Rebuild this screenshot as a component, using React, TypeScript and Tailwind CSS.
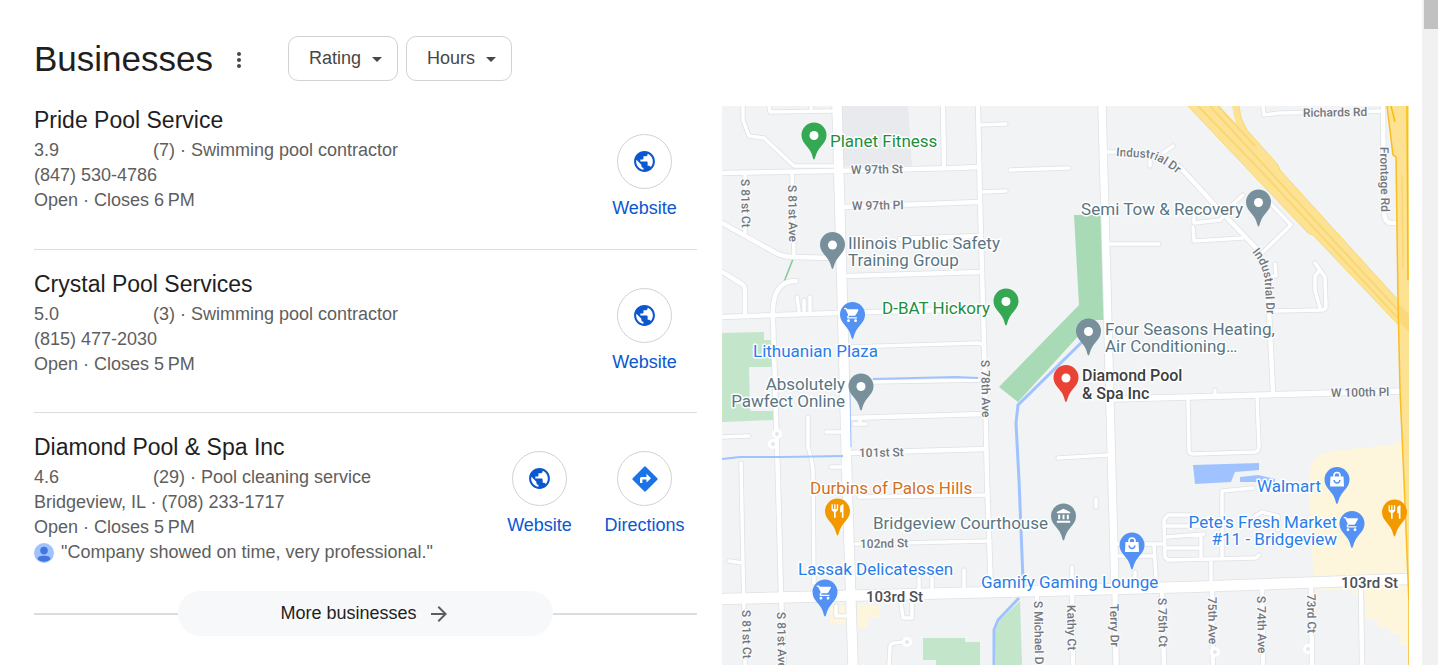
import React from "react";
import {
  MdAccountBalance,
  MdArrowDropDown,
  MdArrowForward,
  MdMoreVert,
  MdPublic,
  MdRestaurant,
  MdShoppingCart,
} from "react-icons/md";

type Business = {
  name: string;
  rating: string;
  reviews: string;
  contact: string;
  hours: string;
  quote?: string;
  directions?: boolean;
};

const businesses: Business[] = [
  {
    name: "Pride Pool Service",
    rating: "3.9",
    reviews: "(7) · Swimming pool contractor",
    contact: "(847) 530-4786",
    hours: "Open · Closes 6\u202fPM",
  },
  {
    name: "Crystal Pool Services",
    rating: "5.0",
    reviews: "(3) · Swimming pool contractor",
    contact: "(815) 477-2030",
    hours: "Open · Closes 5\u202fPM",
  },
  {
    name: "Diamond Pool & Spa Inc",
    rating: "4.6",
    reviews: "(29) · Pool cleaning service",
    contact: "Bridgeview, IL · (708) 233-1717",
    hours: "Open · Closes 5\u202fPM",
    quote: '"Company showed on time, very professional."',
    directions: true,
  },
];

function FilterButton({ label }: { label: string }) {
  return (
    <button
      type="button"
      className="flex h-[45px] items-center rounded-[10px] border border-[#d2d2d2] pr-2 pl-5 text-[18px] text-[#474747]"
    >
      <span className="pb-px">{label}</span>
      <MdArrowDropDown className="ml-1 size-6" aria-hidden="true" />
    </button>
  );
}

function DirectionsIcon() {
  return (
    <svg viewBox="0 0 26 26" className="size-[26px]" aria-hidden="true">
      <path
        d="M12.200 0.700a1.200 1.200 0 0 1 1.600 0L25.300 12.200a1.200 1.200 0 0 1 0 1.600L13.800 25.300a1.200 1.200 0 0 1-1.600 0L0.700 13.800a1.200 1.200 0 0 1 0-1.600Z"
        fill="#1a73e8"
      />
      <path d="M8 17V12.500A1.500 1.500 0 0 1 9.500 11H14.500V7.800L19 12.200L14.500 16.600V13.400H10.400V17Z" fill="#fff" />
    </svg>
  );
}

function Action({ label, children }: { label: string; children: React.ReactNode }) {
  return (
    <a href="#" className="flex w-[105px] flex-col items-center text-[#0b57d0]">
      <span className="flex size-[55px] items-center justify-center rounded-full border border-[#d2d2d2]">
        {children}
      </span>
      <span className="mt-[7px] text-[18px] leading-[25px]">{label}</span>
    </a>
  );
}

function Avatar() {
  return (
    <svg viewBox="0 0 20 20" className="size-5 shrink-0" aria-hidden="true">
      <circle cx="10" cy="10" r="10" fill="#a0c3ff" />
      <circle cx="10" cy="7.600" r="3.800" fill="#4374e0" />
      <path d="M3.600 16.200C3.600 13.600 6 12.800 10 12.800S16.400 13.600 16.400 16.200A9 9 0 0 1 3.600 16.200Z" fill="#4374e0" />
    </svg>
  );
}

function BusinessItem({ business, first, last }: { business: Business; first: boolean; last: boolean }) {
  return (
    <li className={last ? "flex justify-between" : "flex justify-between border-b border-[#dadce0]"}>
      <div className={`min-w-0 ${first ? "" : "pt-5"} ${last ? "pb-[11px]" : first ? "pb-9" : "pb-[35px]"}`}>
        <h2 className="text-[23px] leading-7 text-[#1f1f1f]">
          <a href="#">{business.name}</a>
        </h2>
        <div className="mt-1 text-[18px] leading-[25px] text-[#5e5e5e]">
          <div className="flex">
            <span className="w-[119px]">{business.rating}</span>
            <span>{business.reviews}</span>
          </div>
          <div>{business.contact}</div>
          <div>{business.hours}</div>
          {business.quote && (
            <div className="flex items-center gap-[7px]">
              <Avatar />
              <span>{business.quote}</span>
            </div>
          )}
        </div>
      </div>
      <div className="flex self-center">
        <Action label="Website">
          <MdPublic className="size-[25px]" aria-hidden="true" />
        </Action>
        {business.directions && (
          <Action label="Directions">
            <DirectionsIcon />
          </Action>
        )}
      </div>
    </li>
  );
}

const roads: [number, string][] = [
  [3, "M743 106V120L749 136L764 138L794 166H836"],
  [3, "M769 106L770 112L833 111M811 106V111"],
  [4, "M722 173L833 171L956 168L978 167"],
  [3, "M745 174V233M792 173L794 257"],
  [4, "M722 223L776 253Q784 257 794 257L835 258"],
  [4, "M722 272L742 284Q745 286 745 292V315"],
  [4, "M796 281Q780 281 775 296Q772 306 773 320L776 417L778 480L781 595L784 665"],
  [4, "M844 207L979 202M900 239L979 236M848 276L982 272M943 106L944 167"],
  [3, "M980 125L1006 124M1010 170L1069 168M982 192L1006 191M1110 244H1159"],
  [3, "M797 297L799 311M804 300V311M810 297V311"],
  [4, "M722 317L838 313L983 309"],
  [3, "M849 347L978 343Q984 343 984 350"],
  [3, "M873 382L985 380"],
  [4, "M848 418L985 414M849 453L986 449"],
  [3, "M854 424H866M860 418V424M826 432H843M831 467H846M722 437L749 436"],
  [3, "M808 417V447Q812 458 813 470L814 583M741 463L745 665M729 561L743 563"],
  [4, "M978 106L980 200L984 343L987 480L991 590"],
  [3, "M1107 152H1117M1150 158V166M1163 153L1173 146"],
  [4, "M1117 152L1152 154L1180 167L1213 203L1255 247Q1267 262 1268 290L1273 393"],
  [3, "M1243 195L1232 205M1270 203L1291 225L1263 252M1194 213V223L1220 220L1225 215M1193 227L1194 241L1243 238"],
  [3, "M1275 264L1276 276H1271M1315 263L1325 277L1326 306Q1326 310 1321 310L1275 311M1320 270L1315 276V290L1320 308"],
  [3, "M1263 106L1264 115L1280 113L1383 111"],
  [4, "M1383 106L1384 213Q1385 223 1391 223L1397 223"],
  [3, "M1058 458L1108 455M1096 499V507"],
  [3, "M1188 398L1189 450Q1189 454 1193 454L1255 452Q1259 451 1259 447L1257 397M1215 390V396"],
  [5, "M1113 399L1190 397L1402 391"],
  [3, "M859 497L988 495M856 544L990 541"],
  [3, "M1117 544H1163M1117 556H1153M1154 545L1156 577M1190 515H1168L1164 520L1165 557L1168 560L1256 558L1259 555M1166 526H1204M1166 537L1204 534M1166 548H1201M1201 537V558M1222 557V491L1253 488M1255 516L1262 512L1278 516V530M1211 560V580"],
  [3, "M964 570V588M919 578V590M932 578V590M1072 567V590M1135 572V585"],
  [3, "M901 603L903 618H912V603M889 665L890 647Q890 643 895 643L902 642M836 606V616H848"],
  [4, "M1037 597V665M1072 590L1073 665M1162 592L1164 665M1212 590L1213 665M1262 587L1263 665M1311 588L1312 665M1361 590L1362 665"],
  [5, "M1115 587L1116 665"],
  [7, "M1102 106L1107 290L1112 480L1115 587"],
  [9, "M837 106L842 290L847 480L853 665"],
  [10, "M722 599L956 593L1190 587L1408 579"],
];

const roundabouts: [number, number][] = [
  [907, 642],
  [1215, 652],
  [1308, 649],
  [777, 434],
  [773, 444],
];

const slate = "#78909c";
const green = "#34a853";
const blue = "#5491f5";
const orange = "#f29900";

type PinIcon = "cart" | "bag" | "food" | "civic";

const pins: { x: number; y: number; color: string; icon?: PinIcon }[] = [
  { x: 814, y: 159, color: green },
  { x: 832.5, y: 268.5, color: slate },
  { x: 1258.5, y: 226, color: slate },
  { x: 1006, y: 325, color: green },
  { x: 1088.5, y: 355, color: slate },
  { x: 1066, y: 401.5, color: "#ea4335" },
  { x: 852.5, y: 338.5, color: blue, icon: "cart" },
  { x: 861, y: 410, color: slate },
  { x: 837.5, y: 535, color: orange, icon: "food" },
  { x: 1063.5, y: 540, color: slate, icon: "civic" },
  { x: 1132, y: 569, color: blue, icon: "bag" },
  { x: 1337, y: 503.5, color: blue, icon: "bag" },
  { x: 1352, y: 547.5, color: blue, icon: "cart" },
  { x: 1394.5, y: 536, color: orange, icon: "food" },
  { x: 825, y: 616, color: blue, icon: "cart" },
];

const places: { x: number; y: number; text: string; color: string; end?: boolean }[] = [
  { x: 830, y: 147, text: "Planet Fitness", color: "#1e8e3e" },
  { x: 848, y: 249, text: "Illinois Public Safety", color: "#5a7683" },
  { x: 848, y: 266, text: "Training Group", color: "#5a7683" },
  { x: 1243, y: 215, text: "Semi Tow & Recovery", color: "#5a7683", end: true },
  { x: 990, y: 314, text: "D-BAT Hickory", color: "#1e8e3e", end: true },
  { x: 753, y: 357, text: "Lithuanian Plaza", color: "#2b7de9" },
  { x: 845, y: 390, text: "Absolutely", color: "#5a7683", end: true },
  { x: 845, y: 407, text: "Pawfect Online", color: "#5a7683", end: true },
  { x: 1105, y: 335, text: "Four Seasons Heating,", color: "#5a7683" },
  { x: 1105, y: 352, text: "Air Conditioning…", color: "#5a7683" },
  { x: 810, y: 494, text: "Durbins of Palos Hills", color: "#d2711c" },
  { x: 1048, y: 529, text: "Bridgeview Courthouse", color: "#5a7683", end: true },
  { x: 798, y: 575, text: "Lassak Delicatessen", color: "#2b7de9" },
  { x: 981, y: 588, text: "Gamify Gaming Lounge", color: "#2b7de9" },
  { x: 1321, y: 492, text: "Walmart", color: "#2b7de9", end: true },
  { x: 1337, y: 528, text: "Pete's Fresh Market", color: "#2b7de9", end: true },
  { x: 1337, y: 545, text: "#11 - Bridgeview", color: "#2b7de9", end: true },
];

const streets: { x: number; y: number; text: string; turn: number }[] = [
  { x: 851, y: 174, text: "W 97th St", turn: -1 },
  { x: 852, y: 210, text: "W 97th Pl", turn: -1 },
  { x: 859, y: 457, text: "101st St", turn: -1 },
  { x: 860, y: 548, text: "102nd St", turn: -1 },
  { x: 1303, y: 117, text: "Richards Rd", turn: -1 },
  { x: 1331, y: 397, text: "W 100th Pl", turn: -1 },
  { x: 741, y: 179, text: "S 81st Ct", turn: 89 },
  { x: 788, y: 185, text: "S 81st Ave", turn: 89 },
  { x: 742, y: 610, text: "S 81st Ct", turn: 89 },
  { x: 777, y: 612, text: "S 81st Ave", turn: 89 },
  { x: 981, y: 360, text: "S 78th Ave", turn: 89 },
  { x: 1034, y: 601, text: "S Michael Dr", turn: 89 },
  { x: 1067, y: 605, text: "Kathy Ct", turn: 89 },
  { x: 1110, y: 604, text: "Terry Dr", turn: 89 },
  { x: 1158, y: 598, text: "S 75th Ct", turn: 89 },
  { x: 1208, y: 597, text: "75th Ave", turn: 89 },
  { x: 1257, y: 596, text: "S 74th Ave", turn: 89 },
  { x: 1307, y: 594, text: "73rd Ct", turn: 89 },
  { x: 1380, y: 147, text: "Frontage Rd", turn: 89 },
];

function PinGlyph({ icon }: { icon?: PinIcon }) {
  switch (icon) {
    case "cart":
      return <MdShoppingCart x="-9" y="-32" size={17} color="#fff" />;
    case "food":
      return <MdRestaurant x="-8" y="-32" size={16} color="#fff" />;
    case "civic":
      return <MdAccountBalance x="-8" y="-32" size={16} color="#fff" />;
    case "bag":
      return (
        <g>
          <path d="M-6.500-27H6.500L7-17.500Q7-17 6.500-17H-6.500Q-7-17-7-17.500Z" fill="#fff" />
          <path d="M-3-26.500V-28Q-3-31 0-31T3-28V-26.500" fill="none" stroke="#fff" strokeWidth="1.600" />
          <path d="M-3-23.500Q-2.500-20.500 0-20.500T3-23.500" fill="none" stroke={blue} strokeWidth="1.500" />
        </g>
      );
    default:
      return <circle cx="0" cy="-23.500" r="4.500" fill="#fff" />;
  }
}

function Pin({ x, y, color, icon }: { x: number; y: number; color: string; icon?: PinIcon }) {
  return (
    <g transform={`translate(${x} ${y})`}>
      <path
        d="M0 0.500C-1.200 0.500-1.300-4-4-8.500C-7-13.500-12.500-17-12.500-24A12.500 12.500 0 0 1 12.500-24C12.500-17 7-13.500 4-8.500C1.300-4 1.200 0.500 0 0.500Z"
        fill={color}
      />
      <PinGlyph icon={icon} />
    </g>
  );
}

function AreaMap() {
  return (
    <svg
      viewBox="722 106 687 559"
      preserveAspectRatio="xMidYMin slice"
      role="img"
      aria-label="Map of businesses around Bridgeview, IL"
      className="aspect-[687/559] w-full font-[Roboto,sans-serif]"
    >
      <rect x="722" y="106" width="687" height="559" fill="#f1f3f4" />
      <path d="M842 106H908L912 166H842Z" fill="#e8eaed" />
      <g fill="#c3e5ca">
        <path d="M722 333L764 332V340H771L772 367H749L750 411H773V420L722 422Z" />
        <path d="M923 638H965V642H980V665H936V660H923Z" />
        <path d="M1020 601L1000 620L995 632L996 665H1022Z" />
      </g>
      <path d="M1074 215H1101L1104 320H1093L1018 402L999 387L1079 305Z" fill="#a8dab5" />
      <g fill="#fdf5dc">
        <path d="M1313 575L1309 480Q1309 458 1325 453Q1340 449 1360 448L1393 445L1395 442H1409V590H1313Z" />
        <path d="M1348 590L1357 596H1365V620H1377L1378 628H1390V634H1400L1401 646H1409V585Z" />
        <path d="M831 606H848L845 625L830 623Z" />
        <path d="M858 604L880 606L879 618H868V628L858 629Z" />
      </g>
      <path d="M1193 465L1259 463V470L1235 472L1231 482L1195 484ZM1240 477L1258 475L1275 479V482H1240Z" fill="#a0c3ff" />
      <path d="M793 259L784 282" stroke="#81c995" strokeWidth="1.500" />

      <g fill="none" stroke="#dee1e5" strokeLinecap="round" strokeLinejoin="round">
        {roads.map(([width, d]) => (
          <path key={d} d={d} strokeWidth={width + 2} />
        ))}
      </g>
      <g fill="none" stroke="#fff" strokeLinecap="round" strokeLinejoin="round">
        {roads.map(([width, d]) => (
          <path key={d} d={d} strokeWidth={width + 0.5} />
        ))}
      </g>
      {roundabouts.map(([cx, cy]) => (
        <circle key={`${cx}-${cy}`} cx={cx} cy={cy} r="3.500" fill="#e4e6ea" stroke="#fff" strokeWidth="3" />
      ))}

      <g fill="none" stroke="#a0c3ff" strokeWidth="2">
        <path d="M873 379L956 377L978 378" />
        <path d="M722 459L740 457L783 457L843 456" />
        <path d="M850 390L851 447" strokeWidth="1" />
        <path d="M1082 342L1018 405L1016 423L1019 480L1023 580" strokeWidth="3" />
        <path d="M1019 598L998 620L994 630V665" strokeWidth="3" />
      </g>

      <path d="M1188 106H1218L1236 125L1232 106H1239L1241 118L1247 130L1278 165L1280 170L1409 312V336L1313 235L1308 233Z" fill="#fde293" />
      <g fill="none" stroke="#f9d774" strokeWidth="2">
        <path d="M1198 106L1260 170L1409 330M1210 106L1262 163L1409 322" />
        <path d="M1188 106L1308 233L1313 235L1409 336M1239 106L1241 118L1247 130L1278 165L1280 170L1409 312" strokeWidth="1" />
        <path d="M1218 106L1255 146" />
      </g>
      <path d="M1387 106L1393 155L1396 157L1398 300L1400 390L1404 480L1409 603V106Z" fill="#fde293" />
      <path d="M1387 106L1393 155L1396 157L1398 300L1400 390L1404 480L1409 603V665" fill="none" stroke="#fbbc24" strokeWidth="1.500" />
      <path d="M1399 304L1409 314V332L1399 322Z" fill="#f9d97c" />
      <path d="M1407 106L1408 280M1391 106L1395 122" fill="none" stroke="#fbbc04" strokeWidth="1.500" />
      <path d="M1402 175L1403 268" stroke="#f9d774" strokeWidth="1.500" />

      <g
        fontSize="12"
        fontWeight="500"
        fill="#73777d"
        stroke="#f8f9fa"
        strokeWidth="3"
        strokeLinejoin="round"
        paintOrder="stroke"
      >
        {streets.map(({ x, y, text, turn }) => (
          <text key={`${text}-${x}`} transform={`translate(${x} ${y}) rotate(${turn})`}>
            {text}
          </text>
        ))}
        <path id="industrial-west" d="M1116 156L1148 158Q1162 160 1184 180" fill="none" stroke="none" />
        <path id="industrial-east" d="M1252 252Q1264 266 1265 285L1267 322" fill="none" stroke="none" />
        <text>
          <textPath href="#industrial-west">Industrial Dr</textPath>
        </text>
        <text>
          <textPath href="#industrial-east">Industrial Dr</textPath>
        </text>
      </g>
      <g fontSize="15" fontWeight="500" fill="#4d5156" stroke="#fff" strokeWidth="3" paintOrder="stroke">
        <text x="866" y="602">103rd St</text>
        <text x="1341" y="588">103rd St</text>
      </g>
      <g fontSize="17" stroke="#fff" strokeWidth="3" strokeLinejoin="round" paintOrder="stroke">
        {places.map(({ x, y, text, color, end }) => (
          <text key={text} x={x} y={y} fill={color} textAnchor={end ? "end" : "start"}>
            {text}
          </text>
        ))}
      </g>
      <g fontSize="16" fontWeight="500" fill="#3c4043" stroke="#fff" strokeWidth="3" strokeLinejoin="round" paintOrder="stroke">
        <text x="1082" y="381">Diamond Pool</text>
        <text x="1082" y="399">&amp; Spa Inc</text>
      </g>
      {pins.map((pin) => (
        <Pin key={`${pin.x}-${pin.y}`} {...pin} />
      ))}
    </svg>
  );
}

export default function App() {
  return (
    <div className="flex min-h-screen bg-white font-['Liberation_Sans',Arial,sans-serif]">
      <main className="min-w-0 flex-1 pr-[13px] pl-[34px]">
        <header className="flex items-center pt-9 pb-[25px]">
          <h1 className="text-[35px] leading-[45px] text-[#1f1f1f]">Businesses</h1>
          <button type="button" aria-label="More options" className="ml-3.5 pt-[3px] text-[#474747]">
            <MdMoreVert className="size-6" aria-hidden="true" />
          </button>
          <div className="ml-[37px] flex gap-2">
            <FilterButton label="Rating" />
            <FilterButton label="Hours" />
          </div>
        </header>
        <div className="grid grid-cols-[minmax(0,663fr)_minmax(0,687fr)] items-start gap-[25px]">
          <section>
            <ul>
              {businesses.map((business, index) => (
                <BusinessItem
                  key={business.name}
                  business={business}
                  first={index === 0}
                  last={index === businesses.length - 1}
                />
              ))}
            </ul>
            <div className="mt-[15px] flex items-center">
              <span className="h-0.5 flex-1 bg-[#dadce0]" />
              <a
                href="#"
                className="flex h-[45px] w-[375px] items-center justify-center gap-2.5 rounded-full bg-[#f7f8fa] text-[18px] text-[#1f1f1f]"
              >
                More businesses
                <MdArrowForward className="size-6 text-[#5e5e5e]" aria-hidden="true" />
              </a>
              <span className="h-0.5 flex-1 bg-[#dadce0]" />
            </div>
          </section>
          <AreaMap />
        </div>
      </main>
      <div className="flex w-4 justify-end bg-[#f1f1f1]" aria-hidden="true">
        <div className="h-[29px] w-3.5 bg-[#c1c1c1]" />
      </div>
    </div>
  );
}
